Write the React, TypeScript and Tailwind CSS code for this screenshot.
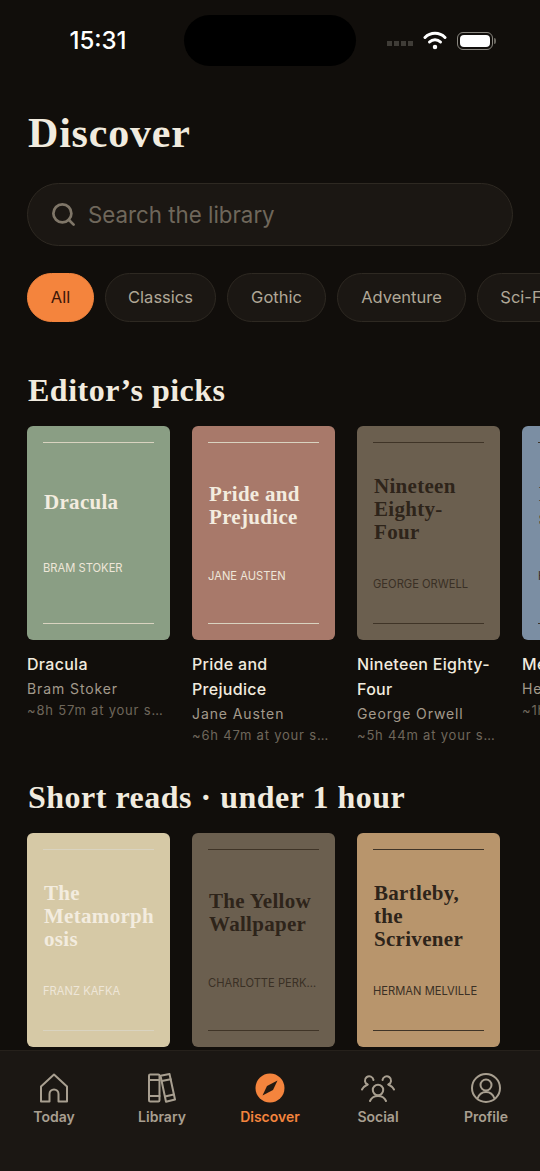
import { Search } from "lucide-react";

const serif = "font-['Liberation_Serif',serif]";
const sans = "font-['Inter',sans-serif]";

type Book = { t: string; a: string; m: string; bg: string; fg: string; rule: string; authorFg: string };
const light = { fg: "text-[#f3ecdf]", rule: "bg-[#d9d3c0]", authorFg: "text-[#eee6d8]" };
const dark = { fg: "text-[#2e241a]", rule: "bg-[#3f3427]", authorFg: "text-[#3a3025]" };

const picks: Book[] = [
  { t: "Dracula", a: "Bram Stoker", m: "~8h 57m at your speed", bg: "bg-[#8a9e84]", ...light },
  { t: "Pride and Prejudice", a: "Jane Austen", m: "~6h 47m at your speed", bg: "bg-[#a8796a]", ...light },
  { t: "Nineteen Eighty-Four", a: "George Orwell", m: "~5h 44m at your speed", bg: "bg-[#6b5f4f]", ...dark },
  { t: "Meditations", a: "Henry Thoreau", m: "~1h 10m at your speed", bg: "bg-[#7b8ea3]", ...dark },
];
const shorts: Book[] = [
  { t: "The Metamorphosis", a: "Franz Kafka", m: "", bg: "bg-[#d6c9a6]", ...light },
  { t: "The Yellow Wallpaper", a: "Charlotte Perkins Gilman", m: "", bg: "bg-[#6b5f4f]", ...dark },
  { t: "Bartleby, the Scrivener", a: "Herman Melville", m: "", bg: "bg-[#b8956c]", ...dark },
];

function Cover({ b }: { b: Book }) {
  return (
    <div className={`flex h-[214px] w-[143px] flex-col rounded-[6px] p-4 ${b.bg}`}>
      <div className={`h-px w-full shrink-0 ${b.rule}`} />
      <div className="flex min-h-0 flex-1 flex-col justify-evenly">
        <div className={`${serif} pl-px text-[21px] leading-[23px] font-bold tracking-[0.3px] break-words ${b.fg}`}>{b.t}</div>
        <div className={`${sans} truncate text-[11.2px] leading-[14px] uppercase ${b.authorFg}`}>{b.a}</div>
      </div>
      <div className={`h-px w-full shrink-0 ${b.rule}`} />
    </div>
  );
}

function Card({ b }: { b: Book }) {
  return (
    <div className="w-[143px] shrink-0">
      <Cover b={b} />
      {b.m && (
        <div className={`${sans} mt-3`}>
          <div className="text-[16px] leading-[25px] font-medium tracking-[0.3px] text-[#f1ebdf]">{b.t}</div>
          <div className="mt-0.5 truncate text-[14px] leading-[20px] tracking-[0.9px] text-[#a39a8b]">{b.a}</div>
          <div className="mt-0.5 truncate text-[13px] leading-[18px] tracking-[0.8px] text-[#6f675b]">{b.m}</div>
        </div>
      )}
    </div>
  );
}

function Chip({ label, width, active }: { label: string; width: string; active?: boolean }) {
  return (
    <div
      className={`${sans} flex h-[49px] shrink-0 items-center justify-center rounded-full border text-[16.5px] ${width} ${
        active
          ? "border-[#f4843d] bg-[#f4843d] text-[#3b1608]"
          : "border-[#2e2922] bg-[#1b1713] text-[#b0a797]"
      }`}
    >
      {label}
    </div>
  );
}

function Home() {
  return (
    <svg width="30" height="30" viewBox="0 0 30 30" fill="none" stroke="currentColor" strokeWidth="2" strokeLinejoin="round" strokeLinecap="round">
      <path d="M2 13.500 L15 1.500 L28 13.500 V28.500 H19.500 V21 a4.500 4.500 0 0 0-9 0 V28.500 H2 Z" />
    </svg>
  );
}

function Books() {
  return (
    <svg width="28" height="30" viewBox="0 0 28 30" fill="none" stroke="currentColor" strokeWidth="2" strokeLinejoin="round" strokeLinecap="round">
      <rect x="1" y="1.500" width="10.500" height="27" rx="1.200" />
      <path d="M1 7h10.500M1 23h10.500" />
      <path d="M12.500 2.800 L21.500 1 L27 26.500 L18 28.700 Z" />
      <path d="M13.700 8 L22.700 6.200M17 23.500 L25.800 21.500" />
    </svg>
  );
}

function Compass() {
  return (
    <svg width="30" height="30" viewBox="0 0 30 30">
      <circle cx="15" cy="15" r="14.500" fill="#f4843d" />
      <path d="M22.500 7.500 L18 17 L7.500 22.500 L12 13 Z" fill="#241a12" />
    </svg>
  );
}

function Social() {
  return (
    <svg width="34" height="28" viewBox="0 0 34 28" fill="none" stroke="currentColor" strokeWidth="2" strokeLinecap="round">
      <circle cx="17" cy="16" r="5.200" />
      <path d="M9 27c1.500-3.500 4.500-5 8-5s6.500 1.500 8 5" />
      <path d="M6.500 10.500a4.300 4.300 0 1 1 6-4.500" />
      <path d="M27.500 10.500a4.300 4.300 0 1 0-6-4.500" />
      <path d="M1 15.500c1-2 3-3.700 5.500-5M33 15.500c-1-2-3-3.700-5.500-5" />
    </svg>
  );
}

function Profile() {
  return (
    <svg width="30" height="30" viewBox="0 0 30 30" fill="none" stroke="currentColor" strokeWidth="2" strokeLinecap="round">
      <circle cx="15" cy="15" r="14" />
      <circle cx="15" cy="12" r="5.500" />
      <path d="M6.500 25.500c1.500-4 5-6.500 8.500-6.500s7 2.500 8.500 6.500" />
    </svg>
  );
}

function NavItem({ label, icon, active }: { label: string; icon: React.ReactNode; active?: boolean }) {
  return (
    <div className={`flex flex-1 flex-col items-center ${active ? "text-[#f4843d]" : "text-[#a89f90]"}`}>
      <div className="flex h-[30px] items-center justify-center">{icon}</div>
      <div className={`${sans} mt-[4px] text-[14px] leading-[20px] font-semibold`}>{label}</div>
    </div>
  );
}

export default function App() {
  return (
    <div className="flex h-[1171px] w-[540px] flex-col overflow-hidden bg-[#110e0b]">
      <div className="min-h-0 flex-1 overflow-hidden">
        <div className="flex h-[81px] items-start pt-[15px]">
          <div className={`${sans} flex h-[51px] w-[184px] items-center justify-center pl-[12px] text-[24px] font-medium text-white`}>15:31</div>
          <div className="h-[51px] w-[172px] rounded-full bg-black" />
          <div className="flex h-[51px] flex-1 items-center pl-[31px]">
            <div className="mt-[5px] flex gap-[2px]">
              <span className="h-[5px] w-[5px] bg-[#3f3c37]" />
              <span className="h-[5px] w-[5px] bg-[#3f3c37]" />
              <span className="h-[5px] w-[5px] bg-[#3f3c37]" />
              <span className="h-[5px] w-[5px] bg-[#3f3c37]" />
            </div>
            <svg className="ml-[10px]" width="24" height="19" viewBox="0 0 24 19" fill="none" stroke="white" strokeWidth="3" strokeLinecap="round">
              <path d="M2 6.500a14 14 0 0 1 20 0" />
              <path d="M6.500 11a8 8 0 0 1 11 0" />
              <circle cx="12" cy="16" r="1.500" fill="white" stroke="white" strokeWidth="1.500" />
            </svg>
            <div className="ml-[10px] flex h-[18px] w-[36px] items-center rounded-[6px] border border-[#8a8780] p-[2px]">
              <div className="h-full w-full rounded-[4px] bg-white" />
            </div>
            <div className="ml-px h-[6px] w-[1.5px] rounded-r-full bg-[#6a6760]" />
          </div>
        </div>

        <div className="px-[27px]">
          <h1 className={`${serif} mt-[29px] pl-px text-[42px] leading-[46px] font-bold tracking-[0.8px] text-[#f1ebdf]`}>Discover</h1>
          <div className="mt-[27px] flex h-[63px] items-center rounded-full border border-[#2e2922] bg-[#1b1713] pl-[22px]">
            <Search size={27} strokeWidth={2.4} className="text-[#7f7668]" />
            <span className={`${sans} ml-[11px] text-[22.3px] text-[#6f675b]`}>Search the library</span>
          </div>
        </div>

        <div className="mt-[27px] flex gap-[11px] pl-[27px]">
          <Chip label="All" width="w-[67px]" active />
          <Chip label="Classics" width="w-[111px]" />
          <Chip label="Gothic" width="w-[99px]" />
          <Chip label="Adventure" width="w-[129px]" />
          <Chip label="Sci-Fi" width="w-[92px]" />
        </div>

        <h2 className={`${serif} mt-[48px] px-[28px] text-[32px] leading-[40px] font-bold tracking-[0.5px] text-[#f1ebdf]`}>Editor’s picks</h2>
        <div className="mt-[16px] flex items-start gap-[22px] pl-[27px]">
          {picks.map((b) => <Card key={b.t} b={b} />)}
        </div>

        <h2 className={`${serif} mt-[33px] px-[28px] text-[32px] leading-[40px] font-bold tracking-[0.5px] text-[#f1ebdf]`}>Short reads · under 1 hour</h2>
        <div className="mt-[16px] flex items-start gap-[22px] pl-[27px]">
          {shorts.map((b) => <Card key={b.t} b={b} />)}
        </div>
      </div>

      <nav className="flex h-[121px] shrink-0 items-start border-t border-[#26211b] bg-[#1b1713] pt-[22px]">
        <NavItem label="Today" icon={<Home />} />
        <NavItem label="Library" icon={<Books />} />
        <NavItem label="Discover" icon={<Compass />} active />
        <NavItem label="Social" icon={<Social />} />
        <NavItem label="Profile" icon={<Profile />} />
      </nav>
    </div>
  );
}
